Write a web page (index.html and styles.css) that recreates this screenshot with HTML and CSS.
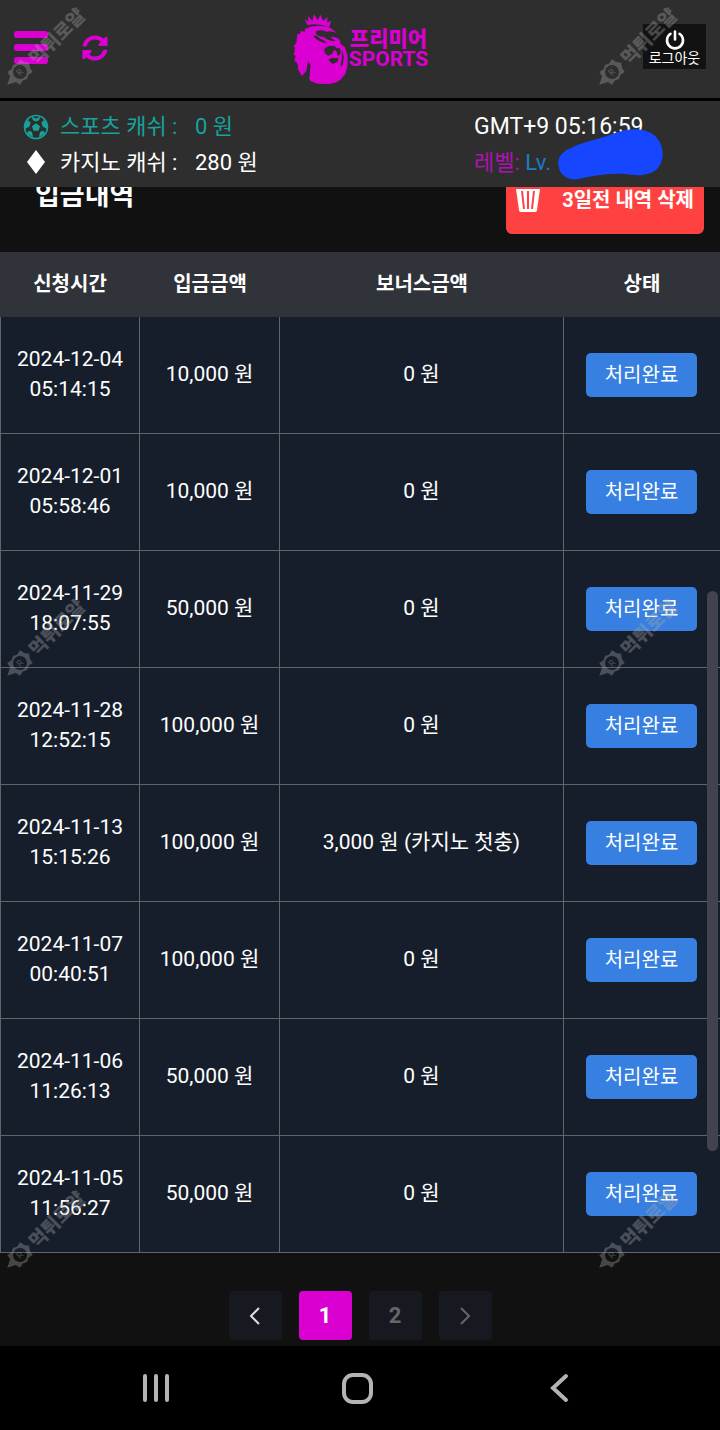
FILE: index.html
```
<!DOCTYPE html>
<html lang="ko">

<head>
    <meta charset="utf-8">
    <meta name="viewport" content="width=device-width, initial-scale=1">
    <title>입금내역</title>
    <link rel="stylesheet" href="styles.css">
</head>

<body>

    <!-- shared shapes -->
    <svg class="defs" width="0" height="0">
        <symbol id="mark" viewBox="0 0 90 90" overflow="visible">
            <g transform="rotate(-45 20 72)">
                <path fill-rule="evenodd" d="M20 62l4 2 5-1 1 5 3 4-3 4-1 5-5-1-4 2-4-2-5 1-1-5-8-4 8-4 1-5 5 1zM20 65a7 7 0 1 0 0 14 7 7 0 1 0 0-14z" />
                <text x="17" y="75" class="mark-r">R</text>
                <text x="36" y="80" class="mark-text">먹튀로얄</text>
            </g>
        </symbol>
    </svg>

    <header class="header">
        <div class="header-left">
            <button type="button" class="icon-btn" aria-label="메뉴">
                <svg width="34" height="34" viewBox="0 0 34 34" fill="#db00d2">
                    <rect y="0" width="34" height="7" rx="3" />
                    <rect y="13" width="34" height="7" rx="3" />
                    <rect y="26" width="34" height="7" rx="3" />
                </svg>
            </button>
            <button type="button" class="icon-btn" aria-label="새로고침">
                <svg width="26" height="26" viewBox="0 0 512 512" fill="#db00d2">
                    <path d="M370 134c-31-30-71-46-114-46-78 0-145 53-163 127-1 5-6 9-12 9H24c-8 0-14-7-12-14C33 93 135 8 256 8c66 0 127 26 172 68l35-35c16-15 41-4 41 17v134c0 13-11 24-24 24H346c-21 0-32-26-17-41z" />
                    <path d="M32 296h134c21 0 32 26 17 41l-41 41c31 30 71 46 114 46 78 0 145-53 163-127 1-5 6-9 12-9h57c8 0 14 7 12 14-21 117-123 202-244 202-66 0-127-26-172-68l-35 35c-16 15-41 4-41-17V320c0-13 11-24 24-24z" />
                </svg>
            </button>
        </div>

        <a href="#" class="logo">
            <svg width="57" height="72" viewBox="28 40 170 216">
                <g fill="#db00d2">
                    <path d="M74 76L65 58l12 8-2-17 14 15 4-21 12 19 8-17 8 19 13-12-1 17 12-6-6 20q-32-14-65-7z" />
                    <path d="M66 88Q102 70 142 84L158 97 170 116 173 132 186 143 194 168 194 198 188 222 175 238 161 248 140 253 105 252 84 245 79 238 81 214 76 191 70 214 58 229 52 221 45 207 46 198 40 186 34 184 39 168 33 166 37 144 32 141 41 128 43 104 52 102 54 94 66 96z" />
                </g>
                <g fill="#2e2e2e">
                    <path d="M98 96Q112 88 132 96 150 92 166 104L172 122Q158 108 143 112L158 124Q138 126 125 113 113 112 101 105 108 117 122 121L134 131Q106 128 90 108L102 108z" />
                    <path d="M124 148l12-8 18-2 8 8 7-2 5 10-2 10-7 6-4-15-7-4-6 12-12 5-10-8z" />
                    <path d="M137 180l10-6 12 2 8-2-3 12-14 7-8-6z" />
                    <path d="M76 184l7 13-4 36-6-22z" />
                    <path d="M177 150l6 22-3 22-7 8 4-26z" />
                </g>
            </svg>
            <span class="logo-text">
                <span class="logo-ko">프리미어</span>
                <span class="logo-en">SPORTS</span>
            </span>
        </a>

        <button type="button" class="logout">
            <svg width="20" height="20" viewBox="0 0 20 20" fill="none" stroke="#fff" stroke-width="2.6" stroke-linecap="round">
                <path d="M5.5 3.800a8 8 0 1 0 9 0M10 1.500v8" />
            </svg>
            로그아웃
        </button>
    </header>

    <div class="info">
        <dl class="cash">
            <div class="cash-row sports">
                <svg width="26" height="26" viewBox="0 0 26 26">
                    <circle cx="13" cy="13" r="11.5" fill="none" stroke="#17a29c" stroke-width="1.6" />
                    <path d="M13 9.200l4 3-1.500 4.600h-5L9 12.200zM8.500 2.600L13 4.400l4.500-1.800L16 6.200 13 7.500 10 6.200zM1.500 11L5 6l2.500 2.500-1 4L2 15zM24.500 11L21 6l-2.500 2.500 1 4L24 15zM4 20l1.500-3.500 3.500 1.500 1 5zM22 20l-1.500-3.500L17 18l-1 5z" fill="#17a29c" />
                </svg>
                <dt>스포츠 캐쉬 :</dt>
                <dd>0 원</dd>
            </div>
            <div class="cash-row">
                <svg width="26" height="26" viewBox="0 0 26 26">
                    <path d="M13 0l9 12-9 12-9-12z" fill="#fff" />
                </svg>
                <dt>카지노 캐쉬 :</dt>
                <dd>280 원</dd>
            </div>
        </dl>
        <div class="user">
            <div class="clock">GMT+9 05:16:59</div>
            <div><span class="level">레벨:</span> <span class="lv">Lv.</span></div>
            <svg class="blob" width="106" height="54" viewBox="0 0 106 54">
                <path d="M14 20C28 13 44 11 58 5 74-1 90 0 98 8c10 9 10 26 1 34-8 6-20 6-31 4-14-1-28 1-42 4C14 54 4 49 2 40-1 31 4 24 14 20z" fill="#1646ff" />
            </svg>
        </div>
    </div>

    <main>
        <div class="title-bar">
            <h2>입금내역</h2>
            <button type="button" class="delete">
                <svg width="26" height="32" viewBox="0 0 26 32">
                    <path d="M1 1h7l2-1h6l2 1h7v2H1zM1 5h24l-3 21q0 2-2 2H6q-2 0-2-2z" fill="#fff" />
                    <path d="M7 7l2 18M13 7v18M19 7l-2 18" stroke="#ff4141" stroke-width="2" />
                </svg>
                3일전 내역 삭제
            </button>
        </div>

        <table class="history">
            <thead>
                <tr>
                    <th class="col-time">신청시간</th>
                    <th class="col-amount">입금금액</th>
                    <th>보너스금액</th>
                    <th class="col-state">상태</th>
                </tr>
            </thead>
            <tbody>
                <tr>
                    <td>2024-12-04<br>05:14:15</td>
                    <td>10,000 원</td>
                    <td>0 원</td>
                    <td><button type="button" class="state">처리완료</button></td>
                </tr>
                <tr>
                    <td>2024-12-01<br>05:58:46</td>
                    <td>10,000 원</td>
                    <td>0 원</td>
                    <td><button type="button" class="state">처리완료</button></td>
                </tr>
                <tr>
                    <td>2024-11-29<br>18:07:55</td>
                    <td>50,000 원</td>
                    <td>0 원</td>
                    <td><button type="button" class="state">처리완료</button></td>
                </tr>
                <tr>
                    <td>2024-11-28<br>12:52:15</td>
                    <td>100,000 원</td>
                    <td>0 원</td>
                    <td><button type="button" class="state">처리완료</button></td>
                </tr>
                <tr>
                    <td>2024-11-13<br>15:15:26</td>
                    <td>100,000 원</td>
                    <td>3,000 원 (카지노 첫충)</td>
                    <td><button type="button" class="state">처리완료</button></td>
                </tr>
                <tr>
                    <td>2024-11-07<br>00:40:51</td>
                    <td>100,000 원</td>
                    <td>0 원</td>
                    <td><button type="button" class="state">처리완료</button></td>
                </tr>
                <tr>
                    <td>2024-11-06<br>11:26:13</td>
                    <td>50,000 원</td>
                    <td>0 원</td>
                    <td><button type="button" class="state">처리완료</button></td>
                </tr>
                <tr>
                    <td>2024-11-05<br>11:56:27</td>
                    <td>50,000 원</td>
                    <td>0 원</td>
                    <td><button type="button" class="state">처리완료</button></td>
                </tr>
            </tbody>
        </table>

        <nav class="pagination">
            <button type="button" class="page prev" aria-label="이전">
                <svg width="12" height="18" viewBox="0 0 12 18"><path d="M10 1L2 9l8 8" /></svg>
            </button>
            <button type="button" class="page active">1</button>
            <button type="button" class="page">2</button>
            <button type="button" class="page" aria-label="다음">
                <svg width="12" height="18" viewBox="0 0 12 18"><path d="M2 1l8 8-8 8" /></svg>
            </button>
        </nav>
    </main>

    <footer class="phone-nav">
        <button type="button" aria-label="최근 앱">
            <svg width="30" height="30" viewBox="0 0 30 30"><path d="M4 3v24M15 3v24M26 3v24" /></svg>
        </button>
        <button type="button" aria-label="홈">
            <svg width="32" height="32" viewBox="0 0 32 32"><rect x="2" y="3" width="27" height="27" rx="9" /></svg>
        </button>
        <button type="button" aria-label="뒤로">
            <svg width="20" height="32" viewBox="0 0 20 32"><path d="M16 4L3 16l13 12" /></svg>
        </button>
    </footer>

    <div class="scrollbar"></div>

    <svg class="mark mark-left mark-top"><use href="#mark" /></svg>
    <svg class="mark mark-right mark-top"><use href="#mark" /></svg>
    <svg class="mark mark-left mark-middle"><use href="#mark" /></svg>
    <svg class="mark mark-right mark-middle"><use href="#mark" /></svg>
    <svg class="mark mark-left mark-bottom"><use href="#mark" /></svg>
    <svg class="mark mark-right mark-bottom"><use href="#mark" /></svg>

</body>

</html>
```
FILE: styles.css
```
* {
    box-sizing: border-box;
}

body {
    position: relative;
    margin: 0;
    background: #111;
    color: #fff;
    font-family: Roboto, "Noto Sans CJK KR", sans-serif;
    font-size: 20px;
    line-height: 30px;
}

button {
    border: none;
    padding: 0;
    background: none;
    color: inherit;
    font: inherit;
    cursor: pointer;
}

svg {
    display: block;
}

.defs {
    position: absolute;
}

/* header */
.header {
    display: grid;
    grid-template-columns: 1fr auto 1fr;
    align-items: center;
    height: 101px;
    padding: 0 14px;
    background: #2e2e2e;
    border-bottom: 3px solid #000;
}

.header-left {
    display: flex;
    align-items: center;
    gap: 34px;
    padding-bottom: 2px;
}

.logo {
    display: flex;
    align-items: center;
    color: #db00d2;
    text-decoration: none;
}

.logo-text {
    display: flex;
    flex-direction: column;
    align-items: center;
    font-weight: 900;
    line-height: 20px;
}

.logo-ko {
    font-size: 21px;
}

.logo-en {
    font-size: 21px;
    font-weight: 700;
}

.logout {
    display: flex;
    flex-direction: column;
    align-items: center;
    justify-self: end;
    width: 63px;
    margin-bottom: 6px;
    padding: 6px 0 3px;
    background: #121212;
    font-size: 14px;
    line-height: 16px;
    white-space: nowrap;
}

/* cash and level */
.info {
    display: grid;
    grid-template-columns: 1fr 246px;
    height: 86px;
    padding: 8px 0 8px 23px;
    background: #2e2e2e;
    font-size: 22px;
    line-height: 36px;
}

.cash {
    margin: 0;
}

.cash-row {
    display: grid;
    grid-template-columns: 37px 135px auto;
    align-items: center;
}

.cash-row dd {
    margin: 0;
}

.sports {
    color: #17a29c;
}

.user {
    position: relative;
}

.clock {
    font-size: 23px;
}

.level {
    color: #b012b0;
}

.lv {
    color: #1c7cc8;
}

.blob {
    position: absolute;
    top: 19px;
    left: 83px;
}

.title-bar {
    display: flex;
    align-items: flex-end;
    justify-content: space-between;
    height: 65px;
    padding: 0 16px 18px 35px;
    overflow: hidden;
}

.title-bar h2 {
    margin: 0 0 20px;
    font-size: 27px;
    line-height: 36px;
}

.delete {
    display: flex;
    flex-shrink: 0;
    align-items: center;
    justify-content: space-between;
    width: 198px;
    height: 68px;
    padding: 0 10px 0 9px;
    border-radius: 6px;
    background: #ff4141;
    font-weight: bold;
}

/* table */
.history {
    width: 100%;
    table-layout: fixed;
    border-spacing: 0;
    text-align: center;
}

.history th {
    height: 65px;
    padding: 0 0 2px;
    background: #303339;
}

.history td {
    height: 117px;
    padding: 0 0 2px;
    background: #161e2c;
    border-right: 1px solid #5f6669;
    border-bottom: 1px solid #5f6669;
    font-size: 21px;
}

.history td:first-child {
    border-left: 1px solid #5f6669;
}

.history td:last-child {
    padding: 0 1px 0 0;
    border-right: none;
}

.col-time,
.col-amount {
    width: 140px;
}

.col-state {
    width: 156px;
}

.state {
    width: 111px;
    height: 44px;
    border-radius: 5px;
    background: #377fe0;
    font-size: 20px;
}

/* pagination */
.pagination {
    display: flex;
    justify-content: center;
    gap: 17px;
    padding: 38px 0 6px;
}

.page {
    display: flex;
    align-items: center;
    justify-content: center;
    width: 53px;
    height: 49px;
    border-radius: 4px;
    background: #161a20;
    color: #65676a;
    font-size: 22px;
    font-weight: bold;
}

.page svg {
    fill: none;
    stroke: currentColor;
    stroke-width: 2;
}

.prev {
    color: #ddd;
}

.active {
    background: #db00d2;
    color: #fff;
}

/* phone buttons */
.phone-nav {
    display: grid;
    grid-template-columns: repeat(3, 1fr);
    align-items: center;
    justify-items: center;
    height: 84px;
    padding: 0 59px 0 55px;
    background: #000;
}

.phone-nav svg {
    fill: none;
    stroke: #b4b4b4;
    stroke-width: 4;
    stroke-linecap: round;
}

.scrollbar {
    position: absolute;
    top: 591px;
    right: 2px;
    width: 11px;
    height: 560px;
    border-radius: 6px;
    background: #41444e;
}

/* watermark */
.mark {
    position: absolute;
    width: 90px;
    height: 90px;
    fill: #aaa;
    opacity: 0.35;
    overflow: visible;
    pointer-events: none;
}

.mark-text {
    font-size: 19px;
    font-weight: 900;
}

.mark-r {
    font-size: 9px;
}

.mark-left {
    left: 0;
}

.mark-right {
    right: 38px;
}

.mark-top {
    top: 0;
}

.mark-middle {
    top: 591px;
}

.mark-bottom {
    top: 1183px;
}
```
